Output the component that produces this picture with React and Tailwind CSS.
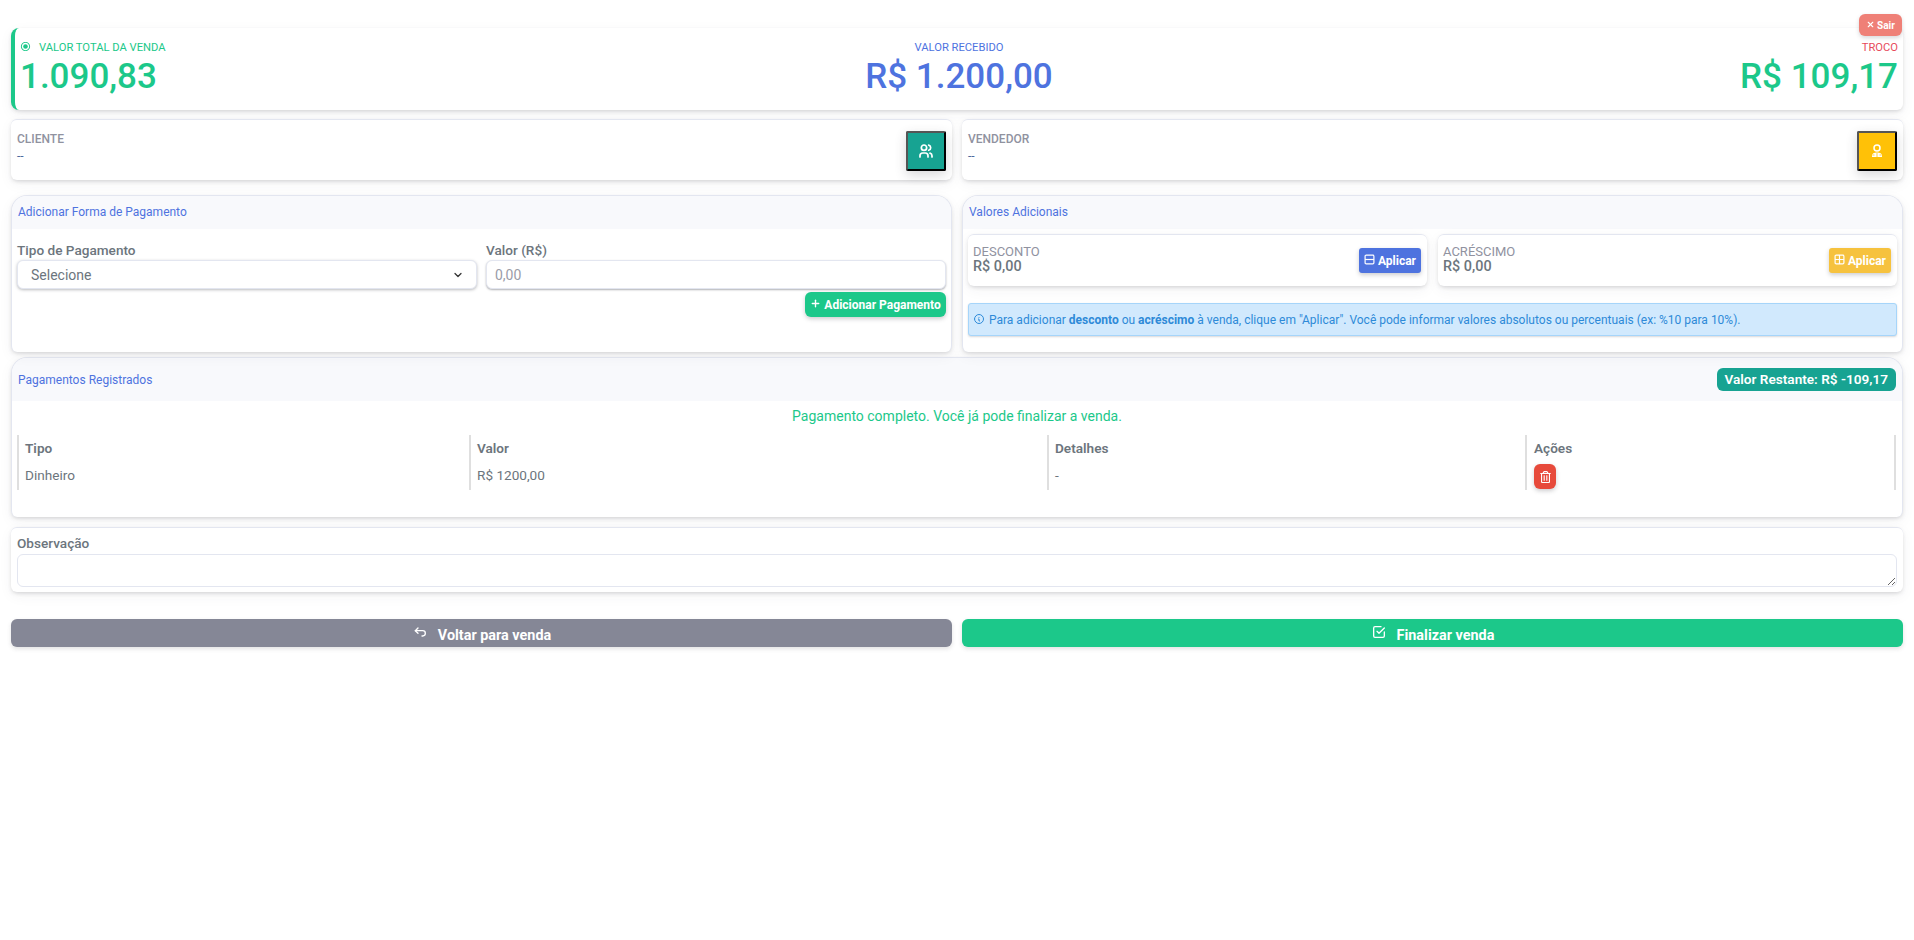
import React from 'react';
import { TbUsers, TbCheckbox, TbArrowBackUp, TbInfoCircle, TbX, TbPlus, TbChevronDown } from 'react-icons/tb';
import { FaRegTrashAlt } from 'react-icons/fa';
import { MdOutlineRadioButtonChecked } from 'react-icons/md';

const cardShadow = 'shadow-[0_2px_4px_-1px_rgba(58,59,69,0.22),0_4px_14px_rgba(58,59,69,0.05)]';

function VendorIcon() {
  return (
    <svg viewBox="0 0 16 16" className="w-4 h-4 text-white" fill="none">
      <circle cx="8" cy="5" r="3" stroke="currentColor" strokeWidth="1.5" />
      <path d="M3 14v-1.5C3 10.5 5 9.5 8 9.5s5 1 5 3V14z" fill="currentColor" />
      <path d="M8 10v4M3.5 12h2M10.5 12h2" stroke="#ffc107" strokeWidth="0.8" />
    </svg>
  );
}

// quadrado com traco de ponta a ponta, como nos botoes Aplicar
function MinusBox({ className }) {
  return (
    <svg viewBox="0 0 12 12" className={className} fill="none" stroke="currentColor" strokeWidth="1.3">
      <rect x="1.2" y="1.2" width="9.6" height="9.6" rx="1.2" />
      <path d="M1.2 6h9.6" />
    </svg>
  );
}

function PlusBox({ className }) {
  return (
    <svg viewBox="0 0 12 12" className={className} fill="none" stroke="currentColor" strokeWidth="1.3">
      <rect x="1.2" y="1.2" width="9.6" height="9.6" rx="1.2" />
      <path d="M1.2 6h9.6M6 1.2v9.6" />
    </svg>
  );
}

function PersonCard({ label, btnClass, children }) {
  return (
    <div className={`flex-1 h-[61px] bg-white border-t border-[#e3e6f0] rounded-md pl-[6px] pr-[6px] pt-[11px] flex justify-between ${cardShadow}`}>
      <div>
        <div className="text-[12px] leading-[16px] font-medium text-[#90929f]">{label}</div>
        <div className="text-[12px] leading-[16px] mt-[1px] text-[#4e6a9f]">--</div>
      </div>
      <button className={`w-10 h-10 flex items-center justify-center border-2 border-t-[#555] border-l-[#555] border-r-black border-b-black rounded-[2px] shadow-[0_4px_12px_rgba(58,59,69,0.2)] ${btnClass}`}>
        {children}
      </button>
    </div>
  );
}

function SectionHeader({ title, children, tall }) {
  return (
    <div className={`bg-[#f8f9fc] flex items-center justify-between pl-[6px] pr-[6px] ${tall ? 'h-[43px]' : 'h-[33px] pb-[2px]'}`}>
      <span className="text-[12px] font-normal text-[#4e73df]">{title}</span>
      {children}
    </div>
  );
}

function ApplyCard({ label, btnClass, Icon }) {
  return (
    <div className={`bg-white border-t border-[#e3e6f0] rounded-md h-[52px] pl-[5px] pr-[6px] pb-[2px] flex items-center justify-between ${cardShadow}`}>
      <div>
        <div className="text-[13px] leading-[14px] font-normal text-[#90929f]">{label}</div>
        <div className="text-[14.4px] leading-[16px] font-medium text-[#6c757d]">R$ 0,00</div>
      </div>
      <button className={`h-[25px] px-[5px] mt-[2px] rounded-[3px] flex items-center gap-[3px] text-white text-[12px] font-bold shadow-[0_2px_4px_rgba(58,59,69,0.25)] ${btnClass}`}>
        <Icon className="w-[11px] h-[11px] -mt-[3px]" />
        Aplicar
      </button>
    </div>
  );
}

export default function App() {
  const colunas = [
    { titulo: 'Tipo', valor: 'Dinheiro' },
    { titulo: 'Valor', valor: 'R$ 1200,00' },
    { titulo: 'Detalhes', valor: '-' },
  ];

  return (
    <div className="relative min-h-screen bg-white pl-[11px] pr-[11px] pt-7 font-['Roboto',sans-serif] text-[14px] text-[#6c757d]">
      <button className="absolute top-[14px] right-3 w-[43px] h-[22px] rounded-md bg-[#ef8077] text-white text-[10px] font-bold flex items-center justify-center gap-[2px] shadow-[0_2px_4px_rgba(58,59,69,0.2)] z-10">
        <TbX className="w-[9px] h-[9px] -mt-[2px]" strokeWidth={3} />
        Sair
      </button>

      {/* Totais */}
      <div className={`h-[82px] bg-white border-l-4 border-[#1cc88a] rounded-l-lg rounded-r-md pl-[5px] pr-[5px] pt-3 flex justify-between ${cardShadow}`}>
        <div className="flex-1">
          <div className="flex items-center text-[11.2px] leading-[16px] text-[#1cc88a]">
            <MdOutlineRadioButtonChecked className="w-[11px] h-[11px] mr-[8px] -mt-[3px]" />
            VALOR TOTAL DA VENDA
          </div>
          <div className="text-[35px] leading-[40px] mt-[1px] font-medium text-[#1cc88a]">1.090,83</div>
        </div>
        <div className="flex-1 text-center">
          <div className="text-[11.2px] leading-[16px] text-[#4e73df]">VALOR RECEBIDO</div>
          <div className="text-[35px] leading-[40px] mt-[1px] font-medium text-[#4e73df]">R$ 1.200,00</div>
        </div>
        <div className="flex-1 text-right">
          <div className="text-[11.2px] leading-[16px] text-[#e74a5b]">TROCO</div>
          <div className="text-[35px] leading-[40px] mt-[1px] font-medium text-[#1cc88a]">R$ 109,17</div>
        </div>
      </div>

      {/* Cliente e vendedor */}
      <div className="flex gap-[10px] mt-[9px]">
        <PersonCard label="CLIENTE" btnClass="bg-[#17a392]">
          <TbUsers className="w-4 h-4 text-white" strokeWidth={2.6} />
        </PersonCard>
        <PersonCard label="VENDEDOR" btnClass="bg-[#ffc107]">
          <VendorIcon />
        </PersonCard>
      </div>

      {/* Pagamento e valores adicionais */}
      <div className="flex gap-[10px] mt-[15px]">
        <div className={`flex-1 h-[157px] bg-white border border-b-0 border-[#e3e6f0] rounded-t-2xl rounded-b-md overflow-hidden ${cardShadow}`}>
          <SectionHeader title="Adicionar Forma de Pagamento" />
          <div className="grid grid-cols-2 gap-[9px] pl-[5px] pr-[5px] pt-[11px]">
            <div>
              <div className="text-[13.6px] leading-[20px] font-medium">Tipo de Pagamento</div>
              <div className="h-[29px] bg-white border border-[#e3e6f0] rounded-md pl-[13px] pr-3 pt-[1px] flex items-center justify-between shadow-[0_1px_3px_rgba(58,59,69,0.35)]">
                <span className="text-[14px] text-[#6c757d]">Selecione</span>
                <TbChevronDown className="w-3 h-3 text-[#333]" strokeWidth={2.5} />
              </div>
            </div>
            <div>
              <div className="text-[13.6px] leading-[20px] font-medium">Valor (R$)</div>
              <input
                placeholder="0,00"
                className="w-full h-[29px] bg-white border border-[#e3e6f0] rounded-md px-[8px] text-[14px] placeholder:text-[#9a9ca8] shadow-[0_1px_2px_rgba(58,59,69,0.4)]"
              />
            </div>
          </div>
          <div className="flex justify-end pr-[5px] mt-[3px]">
            <button className="h-[25px] w-[141px] rounded-md bg-[#1cc88a] text-white text-[12px] font-bold flex items-center justify-center gap-[3px] shadow-[0_2px_4px_rgba(58,59,69,0.25)]">
              <TbPlus className="w-[11px] h-[11px] -mt-[2px]" strokeWidth={3} />
              Adicionar Pagamento
            </button>
          </div>
        </div>

        <div className={`flex-1 h-[157px] bg-white border border-b-0 border-[#e3e6f0] rounded-t-2xl rounded-b-md overflow-hidden ${cardShadow}`}>
          <SectionHeader title="Valores Adicionais" />
          <div className="px-[5px] pt-[5px]">
            <div className="grid grid-cols-2 gap-[11px]">
              <ApplyCard label="DESCONTO" btnClass="bg-[#4e73df]" Icon={MinusBox} />
              <ApplyCard label="ACRÉSCIMO" btnClass="bg-[#f6c23e]" Icon={PlusBox} />
            </div>
            <div className="mt-[17px] h-[33px] bg-[#d1e9fd] border border-[#a6d5fa] rounded-[3px] px-[4px] flex items-center text-[12px] text-[#2e8ad8] shadow-[0_1px_2px_rgba(58,59,69,0.2)]">
              <TbInfoCircle className="w-[12px] h-[12px] mr-[4px] -mt-[2px] shrink-0" />
              <span>
                Para adicionar <b className="font-bold">desconto</b> ou <b className="font-bold">acréscimo</b> à venda, clique em "Aplicar". Você pode informar valores absolutos ou percentuais (ex: %10 para 10%).
              </span>
            </div>
          </div>
        </div>
      </div>

      {/* Pagamentos registrados */}
      <div className={`mt-[5px] h-[160px] bg-white border border-b-0 border-[#e3e6f0] rounded-t-2xl rounded-b-md overflow-hidden ${cardShadow}`}>
        <SectionHeader title="Pagamentos Registrados" tall>
          <span className="h-[23px] px-[8px] rounded-md bg-[#17a392] text-white text-[13.6px] font-semibold flex items-center">Valor Restante: R$ -109,17</span>
        </SectionHeader>
        <div className="text-center text-[14px] leading-[20px] text-[#1cc88a] mt-[5px]">Pagamento completo. Você já pode finalizar a venda.</div>
        <div className="grid grid-cols-[452px_578px_478px_371px] ml-[5px] mt-[9px] h-[55px]">
          {colunas.map((col) => (
            <div key={col.titulo} className="border-l-2 border-[#dfdfdf] pl-[6px] pt-[3px]">
              <div className="text-[13.6px] leading-[20px] font-semibold">{col.titulo}</div>
              <div className="text-[13.6px] leading-[20px] mt-[7px]">{col.valor}</div>
            </div>
          ))}
          <div className="border-x-2 border-[#dfdfdf] pl-[7px] pt-[3px]">
            <div className="text-[13.6px] leading-[20px] font-semibold">Ações</div>
            <button className="mt-[6px] w-[22px] h-[25px] rounded-md bg-[#e74a3b] flex items-center justify-center shadow-[0_2px_4px_rgba(58,59,69,0.25)]">
              <FaRegTrashAlt className="w-[11px] h-[12px] text-white" />
            </button>
          </div>
        </div>
      </div>

      {/* Observacao */}
      <div className={`mt-[10px] h-[65px] bg-white border-t border-[#e3e6f0] rounded-md px-[6px] pt-[5px] ${cardShadow}`}>
        <div className="text-[13.6px] leading-[20px] font-medium">Observação</div>
        <textarea className="block w-full h-[33px] mt-[1px] bg-white border border-[#e3e6f0] rounded-md" />
      </div>

      {/* Acoes */}
      <div className="flex gap-[10px] mt-[27px]">
        <button className="flex-1 h-7 pt-[5px] rounded-md bg-[#858796] text-white text-[14.4px] font-bold flex items-center justify-center gap-[10px] shadow-[0_2px_4px_rgba(58,59,69,0.15)]">
          <TbArrowBackUp className="w-4 h-4 -mt-[8px]" />
          Voltar para venda
        </button>
        <button className="flex-1 h-7 pt-[5px] rounded-md bg-[#1cc88a] text-white text-[14.4px] font-bold flex items-center justify-center gap-[10px] shadow-[0_2px_4px_rgba(58,59,69,0.15)]">
          <TbCheckbox className="w-4 h-4 -mt-[8px]" />
          Finalizar venda
        </button>
      </div>
    </div>
  );
}
